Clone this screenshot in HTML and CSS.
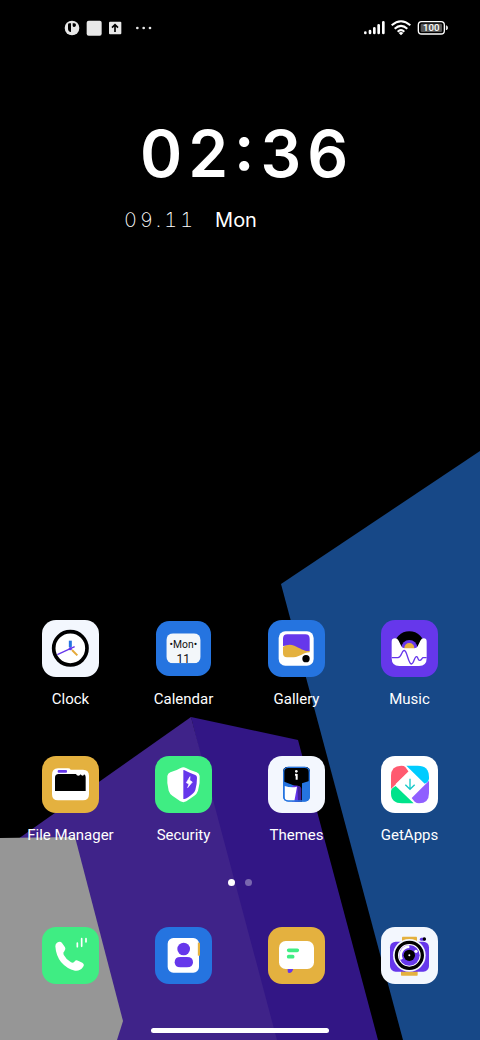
FILE: index.html
```html
<!DOCTYPE HTML>
<html lang="en">

<head>
    <meta charset="utf-8">
    <title>Home screen</title>
    <meta name="viewport" content="width=device-width, initial-scale=1">
    <link rel="stylesheet" href="styles.css">
</head>

<body>
    <svg class="wallpaper" viewBox="0 0 480 1040" preserveAspectRatio="none" aria-hidden="true">
        <polygon fill="#174887" points="281,584 480,451 480,1040 403,1040" />
        <polygon fill="#321685" points="191,717 298,740 378,1040 270,1040" />
        <polygon fill="#3f2389" points="191,717 18,839 60,1040 277,1040" />
        <polygon fill="#969696" points="0,838 75,837 123,1021 117,1040 0,1040" />
    </svg>

    <header class="status">
        <div class="status-group notices">
            <svg width="16" height="16" viewBox="0 0 48 48">
                <circle cx="24" cy="24" r="22" fill="#e8e8e8" />
                <path d="M12 14q0-4 4-4h5v26q-9-2-9-10zM26 10h5q5 0 5 5t-5 6q-5 0-5-4z" fill="#000" />
            </svg>
            <svg width="16" height="16" viewBox="0 0 48 48">
                <rect x="2" y="2" width="45" height="45" rx="6" fill="#e8e8e8" />
            </svg>
            <svg width="14" height="14" viewBox="0 0 42 42">
                <rect x="3" y="2" width="37" height="38" rx="3" fill="#e8e8e8" />
                <path d="M21 33V12M12 20l9-9 9 9" fill="none" stroke="#000" stroke-width="5" />
            </svg>
            <svg class="more" width="18" height="6" viewBox="0 0 54 18" fill="#e8e8e8">
                <circle cx="10" cy="9" r="4" />
                <circle cx="29" cy="9" r="4" />
                <circle cx="48" cy="9" r="4" />
            </svg>
        </div>
        <div class="status-group">
            <svg width="21" height="16" viewBox="0 0 63 48" stroke="#fff" stroke-width="8" stroke-linecap="round">
                <path d="M4 38v1M18 33v6M31 25v14M44 16v23M58 7v32" />
            </svg>
            <svg width="20" height="16" viewBox="0 0 60 48" fill="none" stroke="#fff" stroke-width="6">
                <path d="M2 16Q30-8 58 16M11 26Q30 9 49 26M20 35Q30 26 40 35" />
                <path d="M23 39q7-6 14 0l-7 7z" fill="#fff" stroke="none" />
            </svg>
            <svg width="31" height="16" viewBox="0 0 93 48">
                <rect x="4" y="5" width="78" height="37" rx="10" fill="none" stroke="#fff" stroke-width="4" />
                <rect x="11" y="11" width="64" height="25" rx="4" fill="#555" />
                <path d="M88 17q4 2 4 6t-4 7z" fill="#fff" stroke="#fff" stroke-width="2" />
                <text class="battery-text" x="43" y="34">100</text>
            </svg>
        </div>
    </header>

    <section class="widget">
        <div class="time">02:36</div>
        <div class="date"><span class="day">09.11</span><span>Mon</span></div>
    </section>

    <main class="apps">
        <a class="app" href="#">
            <svg class="icon" viewBox="0 0 171 171">
                <rect width="171" height="171" rx="42" fill="#f3f7fe" />
                <circle cx="85" cy="85" r="50" fill="#fff" stroke="#000" stroke-width="11" />
                <path d="M85 62v19" stroke="#2574e0" stroke-width="9" />
                <path d="M90 90l16 16" stroke="#e4a93a" stroke-width="6" />
                <path d="M46 104l52-24" stroke="#6637eb" stroke-width="4" />
                <circle cx="85" cy="86" r="5" fill="#6637eb" />
            </svg>
            <span class="label">Clock</span>
        </a>
        <a class="app" href="#">
            <svg class="icon" viewBox="0 0 171 171">
                <rect x="3" y="3" width="165" height="165" rx="40" fill="#2574e0" />
                <clipPath id="page"><rect x="34" y="40" width="103" height="90" rx="20" /></clipPath>
                <g clip-path="url(#page)">
                    <rect x="34" y="40" width="103" height="90" fill="#f3f7fa" />
                    <text class="cal-text" x="85" y="85" font-size="31">•Mon•</text>
                    <text class="cal-text" x="85" y="130" font-size="36">11</text>
                </g>
            </svg>
            <span class="label">Calendar</span>
        </a>
        <a class="app" href="#">
            <svg class="icon" viewBox="0 0 171 171">
                <rect width="171" height="171" rx="42" fill="#2574e0" />
                <rect x="32" y="34" width="105" height="103" rx="20" fill="#fff" />
                <path d="M45 56q0-13 13-13h54q13 0 13 13v37q-20 5-40-5-25-13-40-10z" fill="#6637eb" />
                <path d="M45 80q17-10 34-3c19 8 29 17 46 16v4c-20 0-28 14-48 15H57q-12 0-12-12z" fill="#e4b13f" />
                <circle cx="114" cy="116" r="11" fill="#000" />
            </svg>
            <span class="label">Gallery</span>
        </a>
        <a class="app" href="#">
            <svg class="icon" viewBox="0 0 171 171">
                <rect width="171" height="171" rx="42" fill="#6637eb" />
                <circle cx="85" cy="80" r="46" fill="#000" />
                <circle cx="85" cy="84" r="24" fill="#6637eb" />
                <circle cx="85" cy="84" r="15" fill="#e4b13f" />
                <path d="M32 65q0-10 10-10 7 0 11 7l8 17q3 6 10 6h29q7 0 10-6l8-17q4-7 10-7 9 0 9 10v50q0 23-23 23H55q-23 0-23-23z" fill="#fff" />
                <path d="M32 113h19c9 0 11-18 17-21 10-5 13 39 23 40 8 0 9-24 16-22 6 2 2 12 10 11 6-1 5-8 10-8h10" fill="none" stroke="#6637eb" stroke-width="4" />
            </svg>
            <span class="label">Music</span>
        </a>
        <a class="app" href="#">
            <svg class="icon" viewBox="0 0 171 171">
                <rect width="171" height="171" rx="42" fill="#e4b13f" />
                <path d="M30 57q0-20 18-20h30q6 0 8 4h37q18 0 18 18v56q0 18-18 18H48q-18 0-18-18z" fill="#fff" />
                <rect x="47" y="42" width="28" height="8" rx="3" fill="#6637eb" />
                <path d="M39 65q0-11 11-11h52q2 5 7 5t7-4q2 4 6 4t4-4q5 2 5 8v42H39z" fill="#000" />
            </svg>
            <span class="label">File Manager</span>
        </a>
        <a class="app" href="#">
            <svg class="icon" viewBox="0 0 171 171">
                <rect width="171" height="171" rx="42" fill="#3fed83" />
                <path d="M77 36q8-4 16 0 14 8 32 13 8 3 9 11 2 20-5 44-3 9-11 15l-24 17q-9 5-18 0l-24-17q-8-6-11-15-6-24-4-44 1-8 9-11 18-5 31-13z" fill="#fff" />
                <path d="M85 42q4 0 8 3 14 7 28 12 5 2 5 8 0 20-5 37-2 7-8 11-16 13-22 15-3 1-6 1z" fill="#6637eb" />
                <path d="M105 62L94 80l8 4-4 11 14-17-8-5z" fill="#fff" stroke="#fff" stroke-width="2" />
            </svg>
            <span class="label">Security</span>
        </a>
        <a class="app" href="#">
            <svg class="icon" viewBox="0 0 171 171">
                <rect width="171" height="171" rx="42" fill="#f3f7fe" />
                <clipPath id="theme"><rect x="45" y="32" width="81" height="105" rx="15" /></clipPath>
                <g clip-path="url(#theme)">
                    <rect x="45" y="32" width="81" height="105" fill="#2574e0" />
                    <path d="M45 32h81v42l-24 8v56H82V90L45 76z" fill="#000" />
                    <path d="M72 90q14-4 24 2v46H72z" fill="#6637eb" />
                    <path d="M88 90q12 0 12 9v39H90z" fill="#43209d" />
                    <path d="M50 90q20 7 37 2l-8 44H60q-10 0-10-12z" fill="#fff" />
                </g>
                <rect x="47" y="34" width="77" height="101" rx="14" fill="none" stroke="#2574e0" stroke-width="4" />
                <circle cx="85" cy="46" r="4" fill="#fff" />
                <path d="M81 56h5M86 54v17" fill="none" stroke="#fff" stroke-width="6" />
            </svg>
            <span class="label">Themes</span>
        </a>
        <a class="app" href="#">
            <svg class="icon" viewBox="0 0 171 171">
                <rect width="171" height="171" rx="42" fill="#fff" />
                <path d="M30 99V60q0-31 31-31 8 0 12 4l10 14z" fill="#ff5a70" />
                <path d="M76 29h34q34 0 34 34v4q0 7-5 12l-8 4z" fill="#00ccff" />
                <path d="M144 74v37q0 31-30 31-7 0-13-5l-9-11z" fill="#905fff" />
                <path d="M98 142H63q-33 0-33-30v-6q0-6 5-10l9-6z" fill="#00e38b" />
                <path d="M87 42l43 42-43 44-43-44z" fill="#fff" />
                <path d="M87 68v32M73 86l14 14 14-14" fill="none" stroke="#15c9c8" stroke-width="4" />
            </svg>
            <span class="label">GetApps</span>
        </a>
    </main>

    <div class="pager">
        <span class="dot active"></span>
        <span class="dot"></span>
    </div>

    <nav class="dock">
        <a class="app" href="#" aria-label="Phone">
            <svg class="icon" viewBox="0 0 171 171">
                <rect width="171" height="171" rx="42" fill="#3fed83" />
                <path d="M45 47q10-6 15 1l9 13q4 7-2 12-5 4-2 10 8 15 22 23 6 3 10-2 5-6 11-3l13 6q8 5 2 13-9 13-24 11-24-5-42-26Q42 86 40 58q0-7 5-11z" fill="#fff" />
                <path d="M106 48v11M119 35v23M132 35v10" stroke="#fff" stroke-width="5" stroke-linecap="round" />
            </svg>
        </a>
        <a class="app" href="#" aria-label="Contacts">
            <svg class="icon" viewBox="0 0 171 171">
                <rect width="171" height="171" rx="42" fill="#2574e0" />
                <rect x="115" y="47" width="20" height="39" rx="3" fill="#e4b13f" />
                <rect x="38" y="33" width="94" height="104" rx="17" fill="#fff" />
                <path d="M131 47v39" stroke="#e4b13f" stroke-width="5" />
                <circle cx="86" cy="66" r="19" fill="#6637eb" />
                <path d="M59 106q0-16 17-16h20q18 0 18 16 0 15-18 15H76q-17 0-17-15z" fill="#6637eb" />
            </svg>
        </a>
        <a class="app" href="#" aria-label="Messages">
            <svg class="icon" viewBox="0 0 171 171">
                <rect width="171" height="171" rx="42" fill="#e4b13f" />
                <path d="M59 124h17q-2 14-13 14-4 0-4-5z" fill="#6637eb" />
                <rect x="33" y="42" width="105" height="84" rx="20" fill="#fff" />
                <path d="M62 70h26M62 89h12" stroke="#3fed83" stroke-width="11" stroke-linecap="round" />
            </svg>
        </a>
        <a class="app" href="#" aria-label="Camera">
            <svg class="icon" viewBox="0 0 171 171">
                <rect width="171" height="171" rx="42" fill="#f3f7fe" />
                <rect x="63" y="29" width="45" height="30" rx="2" fill="#e4b13f" />
                <rect x="60" y="115" width="50" height="31" rx="2" fill="#e4b13f" />
                <rect x="27" y="44" width="117" height="90" rx="17" fill="#6637eb" />
                <path d="M121 37h9" stroke="#6637eb" stroke-width="9" stroke-linecap="round" />
                <circle cx="130" cy="36" r="5" fill="#000" />
                <circle cx="85" cy="85" r="49" fill="#f3f7fe" />
                <circle cx="85" cy="85" r="39" fill="#fff" stroke="#000" stroke-width="10" />
                <circle cx="85" cy="85" r="31" fill="#6637eb" />
                <path d="M62 97a26 26 0 0 1 23-38" fill="none" stroke="#fff" stroke-width="8" />
                <circle cx="105" cy="73" r="5" fill="#fff" />
                <circle cx="85" cy="85" r="17" fill="#000" />
                <circle cx="85" cy="85" r="3" fill="#fff" />
            </svg>
        </a>
    </nav>

    <div class="home-bar"></div>
</body>

</html>
```
FILE: styles.css
```css
* {
    box-sizing: border-box;
}

body {
    position: relative;
    display: flex;
    flex-direction: column;
    min-height: 100vh;
    margin: 0;
    padding-bottom: 7px;
    background-color: black;
    color: white;
    font-family: Roboto, sans-serif;
}

/* sits behind everything */
.wallpaper {
    position: absolute;
    top: 0;
    left: 0;
    width: 100%;
    height: 100%;
    z-index: -1;
}

.status {
    display: flex;
    justify-content: space-between;
    padding: 20px 32px 0px 64px;
}

.status-group {
    display: flex;
    align-items: center;
    gap: 6px;
}

.more {
    margin-left: 6px;
}

.battery-text {
    font-size: 29px;
    font-weight: 500;
    text-anchor: middle;
    fill: white;
}

.widget {
    width: 50%;
    margin: 86px auto 0px;
    padding-left: 4px;
    font-family: Inter, sans-serif;
}

/* "case" lifts the colon to the middle of the digits */
.time {
    padding-left: 16px;
    font-size: 64px;
    line-height: 64px;
    font-weight: 600;
    font-feature-settings: "case";
    letter-spacing: 6px;
    white-space: nowrap;
}

.date {
    display: flex;
    gap: 19px;
    margin-top: 22px;
    font-size: 20px;
    line-height: 24px;
}

.day {
    font-weight: 200;
    font-feature-settings: "tnum";
    letter-spacing: 3px;
}

.apps {
    display: grid;
    grid-template-columns: repeat(4, 1fr);
    row-gap: 47px;
    margin-top: auto;
    padding: 0px 14px;
}

.app {
    display: flex;
    flex-direction: column;
    align-items: center;
    gap: 12px;
    color: white;
    text-decoration: none;
}

.icon {
    width: 57px;
    height: 57px;
}

.label {
    font-size: 15px;
    line-height: 20px;
    white-space: nowrap;
}

.cal-text {
    text-anchor: middle;
    fill: #111;
}

.pager {
    display: flex;
    justify-content: center;
    gap: 10px;
    margin-top: 34px;
}

.dot {
    width: 7px;
    height: 7px;
    border-radius: 50%;
    background-color: white;
    opacity: 0.35;
}

.dot.active {
    opacity: 1;
}

.dock {
    display: grid;
    grid-template-columns: repeat(4, 1fr);
    margin-top: 41px;
    padding: 0px 14px;
}

.home-bar {
    width: 37%;
    height: 5px;
    margin: 44px auto 0px;
    border-radius: 3px;
    background-color: white;
}
```
